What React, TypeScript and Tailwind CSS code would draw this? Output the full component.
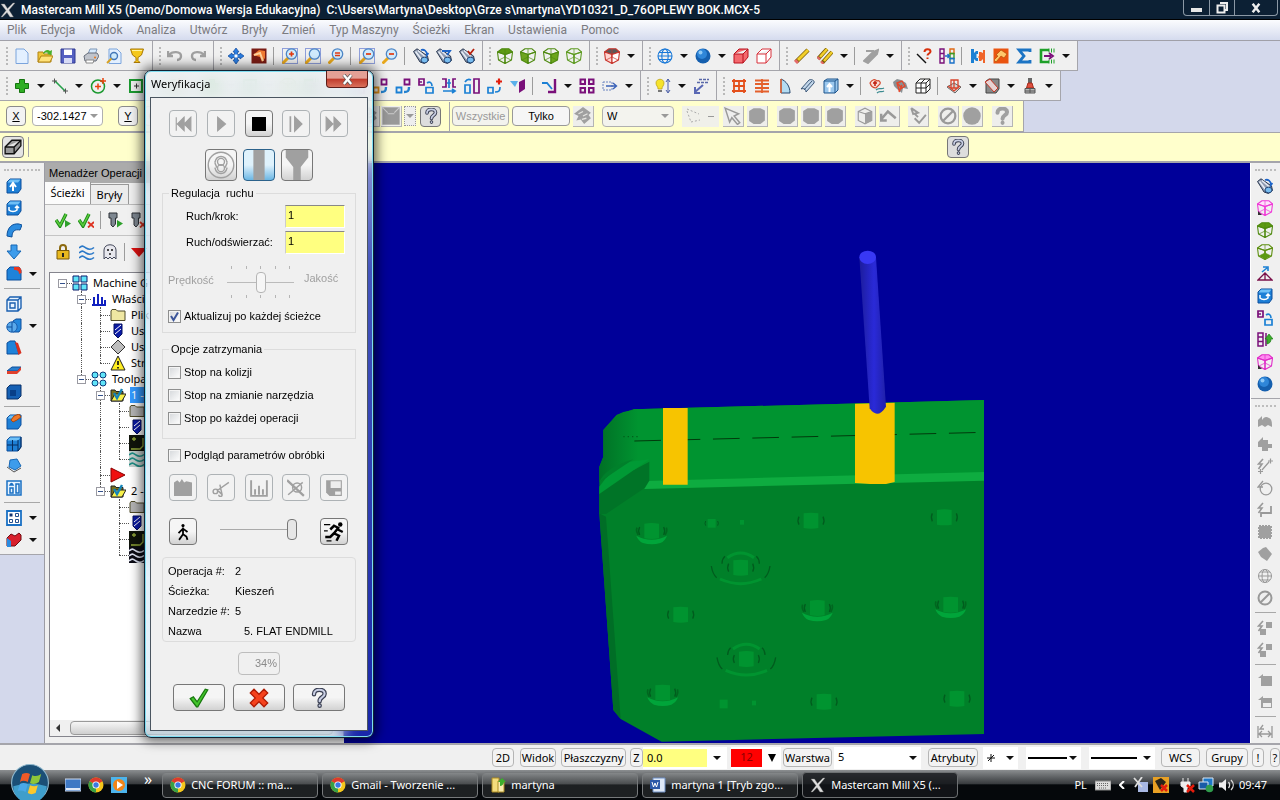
import React, {ReactNode} from "react";
import {clsx} from "clsx";

const cube = (color: string, top = "none", left = "none", right = "none") => (
    <g stroke={color} strokeWidth="1.100" strokeLinejoin="round">
        <path d="M.5 4 5 .8h7L15.500 4 8 6.500z" fill={top}/>
        <path d="M.5 4 8 6.500v9L1.500 12z" fill={left}/>
        <path d="M15.500 4 8 6.500v9l6.500-3.500z" fill={right}/>
        <path d="M2 12l6-3 6 3M8 1v8" fill="none" strokeWidth=".7"/>
    </g>
);

const magnifier = (sign: string, dotted: boolean) => (
    <g fill="none">
        {dotted && <path d="M.5.5h15v15H.5z" stroke="#2f4fc4" strokeDasharray="1 1"/>}
        <path d="M1.500 14.500 6 10" stroke="#e8a81c" strokeWidth="3" strokeLinecap="round"/>
        <circle cx="9.500" cy="6" r="5.200" fill="#cfeafc" stroke="#4d86c6" strokeWidth="1.300"/>
        <path d={sign} stroke="#e23a10" strokeWidth="1.700"/>
    </g>
);

const binoculars = (accent: string, mark: string) => (
    <g>
        <path d="M.5 3.500 4 .8 14.500 8l1 4.500-4 3L7 14z" fill="#8f9bb0" stroke="#2b3850"/>
        <path d="M2.500 3.500 9 12M5 2.500l7 6" stroke="#e6ecf5" strokeWidth="1.600"/>
        <ellipse cx="11.500" cy="12" rx="3.500" ry="2.800" fill="#78bdf0" stroke="#274a7a"/>
        <path d={mark} fill="none" stroke={accent} strokeWidth="1.800"/>
    </g>
);

const blueBox = (extra: ReactNode) => (
    <g>
        <path d="M1 4 4 1h11v10l-3 4H1z" fill="#1d7fd6" stroke="#0d4f9c"/>
        <path d="M1.500 4.500 4 1.500h10.500L12 4.500z" fill="#6fc0f7"/>
        {extra}
    </g>
);

const squares = (a: string, b: string, d: string) => (
    <g fill="none" strokeWidth="1.800">
        <path d="M9.500 1.500h5v5h-5z" stroke={a}/>
        <path d="M1.500 9.500h5v5h-5z" stroke={b}/>
        <path d={d} stroke="#2482cf" strokeWidth="2.400"/>
    </g>
);

const grayCube = <path d="M1 3.500 5 1h6l4 2v9l-4 3H5l-4-2.500z" fill="#a0a0a0"/>;
const bolt = <path d="M6 1 1.500 6H5L1.500 11" fill="none" stroke="#999" strokeWidth="1.600"/>;
const question = (fill: string, stroke: string) => (
    <g fill="none" strokeLinecap="round">
        <path d="M4 5c0-5 8.500-4.500 8.500-.5C12.500 7.500 8.500 7 8.500 10.500M8.500 14v.1" stroke={stroke} strokeWidth="3.600"/>
        <path d="M4 5c0-5 8.500-4.500 8.500-.5C12.500 7.500 8.500 7 8.500 10.500M8.500 14v.1" stroke={fill} strokeWidth="1.700"/>
    </g>
);
const folder = (fill: string) => <path d="M1 13.500V4l1-1.500h4L7.500 4H15v9.500z" fill={fill} stroke="#4f4a28"/>;
const waves = (stroke: string) => (
    <path d="M0 4c3-3 4-2 7 0s5 2 8-.5M0 9c3-3 4-2 7 0s5 2 8-.5M0 14c3-3 4-2 7 0s5 2 8-.5" fill="none"
          stroke={stroke} strokeWidth="1.600"/>
);
const shield = <g><path d="M4 1h8v10l-4 4-4-4z" fill="#0b1aa5" stroke="#06105f"/><path d="M5 7l6-5M5 11l6-5" stroke="#fff"/></g>;
const opFolder = (
    <g>
        <path d="M1 14V3h4l1 1.500h7V14z" fill="#77701b" stroke="#222"/>
        <path d="M1 14 5 7h11l-4 7z" fill="#f7f04a" stroke="#222"/>
        <path d="M4 6l3 5 5-9" fill="none" stroke="#1484b8" strokeWidth="2.400"/>
    </g>
);
const board = <g><path d="M0 0h16v16H0z" fill="#10140b"/><path d="M3 4h4M5 2v4M2 14h9l3-3V3" fill="none" stroke="#93a83a" strokeWidth="1.300"/></g>;
const toolShank = <path d="M2 1h8v5H8.500v6L6 15l-2-2V6H2z" fill="#7e8791" stroke="#2c3036"/>;

const icons: Record<string, ReactNode> = {
    x: <path d="M1 2h3.500l3 4.500L13 1h2L9 8l4.500 7H10L7 10.500 2.500 15H1l5-6.500z" fill="#ddd" stroke="#777" strokeWidth=".4"/>,
    new: <path d="M2 1h8l4 4v10.500H2z" fill="#e3f0ff" stroke="#7ba4dc"/>,
    open: <g><path d="M1 14V4h5l1 2h7v8z" fill="#f0c63a" stroke="#b28412"/><path d="M1 14 4 8h12l-3 6z" fill="#ffe27a" stroke="#b28412"/><path d="M6 6c1-4 5-5 7-3l2-1-.5 5L10 6l1.500-1C9.500 4 8 4.500 6 6z" fill="#47b02c"/></g>,
    save: <g><path d="M1 1h14v14H1z" fill="#5560c2" stroke="#303a92"/><path d="M4 1.500h8V7H4z" fill="#fff"/><path d="M4 10h8v5H4z" fill="#d7dbf5"/></g>,
    print: <g><path d="M5 6 7 1h7l-2 6z" fill="#d6e9fb" stroke="#7d97b8"/><path d="M1 8l4-3h9l2 3-3 5H2z" fill="#c0c4cc" stroke="#666d7a"/><path d="M3 12h8l-1 3H3z" fill="#fff" stroke="#888"/><circle cx="12" cy="9.500" r="1" fill="#e97718"/></g>,
    preview: <g><path d="M3 1h8l4 4v10.500H3z" fill="#e3f0ff" stroke="#7ba4dc"/><circle cx="8" cy="8" r="3.500" fill="#cdeafc" stroke="#4478b8" strokeWidth="1.400"/><path d="M5.500 10.500 1 15" stroke="#d8a224" strokeWidth="2"/></g>,
    trophy: <g><path d="M1.500 1h13l-2 6-3.500 2.500v3l2 2H5l2-2v-3L3.500 7z" fill="#f5c81c" stroke="#a97807"/><path d="M3 2.500h10" stroke="#fff3a0"/></g>,
    undo: <path d="M1 3v5h5M2 7c3-4 12-4 12 1 0 3-2 4-4 4" fill="none" stroke="#a0a0a0" strokeWidth="2.400"/>,
    redo: <path d="M15 3v5h-5M14 7C11 3 2 3 2 8c0 3 2 4 4 4" fill="none" stroke="#a0a0a0" strokeWidth="2.400"/>,
    pan: <g><path d="M8 0l3 4H9.500v2.500H12V5l4 3-4 3V9.500H9.500V12H11l-3 4-3-4h1.500V9.500H4V11L0 8l4-3v1.500h2.500V4H5z" fill="#2b7de0" stroke="#124a9c" strokeWidth=".7"/><path d="M6.500 6.500h3v3h-3z" fill="#fff"/></g>,
    repaint: <g><path d="M.5.5h15v15H.5z" fill="#7a1c14"/><path d="M2 7l6-5 6 1v7l-3 4-2-5z" fill="#ef7a32"/><path d="M3 7l6-2 3 8" stroke="#ffd09a" strokeWidth="2" fill="none"/></g>,
    hammer: <g><path d="M.5.5h15v15H.5z" fill="#ea5410"/><path d="M3 7l5-5 6 4-3 4-3-2-5 6-2-2 4-4z" fill="#ffc76b" stroke="#a94400" strokeWidth=".6"/></g>,
    zoomWindow: magnifier("M7 6h5M9.500 3.500v5", true),
    zoomTarget: magnifier("M0 0", true),
    zoomFit: magnifier("M7 5h5M7 7.500h5", false),
    unzoomBox: magnifier("M7 6h5", true),
    unzoom: magnifier("M7 6h5", false),
    view1: binoculars("#1c64c8", "M8 2c3-1 6 1 6 5l1.500-2"),
    view2: binoculars("#1c64c8", "M6 3h8l-3 4"),
    view3: binoculars("#b8200c", "M9 3l2 3 4-5"),
    cubeTop: cube("#4f8a10", "#5d9a12"),
    cubeFront: cube("#4f8a10", "none", "#6da51e"),
    cubeRight: cube("#4f8a10", "none", "none", "#6da51e"),
    cubeWire: cube("#5d9a20"),
    cubeBottom: <g>{cube("#5d8f10")}<path d="M2 12l6-3 6 3-6 3z" fill="#5d9a12"/></g>,
    cubeRedTop: cube("#c8342c", "#5a5a5a", "#ffd4d0", "#fff"),
    cubePink: <g>{cube("#f03ad8", "#ffe3fb")}<path d="M1 11l4 4H1z" fill="#333"/></g>,
    cubePinkFull: <g>{cube("#e02cc8", "#ff8cf0")}<path d="M1 11l4 4H1z" fill="#333"/></g>,
    redBox: <path d="M1 6l5-5h9v8l-5 6H1zM1 6h9l5-5M10 6v9" fill="#f4696e" stroke="#b8101c"/>,
    redWire: <path d="M1 6l5-5h9v8l-5 6H1zM1 6h9l5-5M10 6v9" fill="#fff" stroke="#d8303a"/>,
    globe: <g fill="none" stroke="#1878d8" strokeWidth="1.100"><circle cx="8" cy="8" r="7"/><ellipse cx="8" cy="8" rx="3.200" ry="7"/><path d="M1 8h14M2 4.500h12M2 11.500h12"/></g>,
    sphere: <g><circle cx="8" cy="8" r="7.500" fill="#155fae"/><circle cx="7" cy="6" r="5" fill="#2f86d8"/><circle cx="5.500" cy="4.500" r="2" fill="#8ec8f5"/></g>,
    pencil: <g><path d="M2 14 14 2" stroke="#7a5c08" strokeWidth="4.500"/><path d="M4 12 14 2" stroke="#f2cf2a" strokeWidth="3"/><path d="M1.500 14.500l2-2" stroke="#e46a6a" strokeWidth="4"/></g>,
    pencils: <g><path d="M1 11 10 1M5 15l10-11" stroke="#7a5c08" strokeWidth="4"/><path d="M3 9l7-8M7 13l8-9" stroke="#f2cf2a" strokeWidth="2.600"/><path d="M1 11l1.500-1.500M4.500 15.500 6 14" stroke="#e46a6a" strokeWidth="3.500"/></g>,
    grayPencil: <path d="M1 13 10 4l5-2-1 4-9 9zM3 3h8" fill="#a0a0a0" stroke="#a0a0a0" strokeWidth="2"/>,
    analyze: <g fill="none"><path d="M1 6l9 9" stroke="#111" strokeWidth="1.400"/><path d="M8.500 4c0-4 6-3.500 6-.5 0 2-3 2-3 4M11.500 9.500v1.500" stroke="#d8300c" strokeWidth="2"/></g>,
    map: <g fill="none" strokeWidth="1.400"><path d="M1 1h4v14H1zM1 5.500h4M1 10.500h4" stroke="#7a107a"/><path d="M11 1h4v4.500h-4z" stroke="#e06a14"/><path d="M11 5.500h4v5h-4z" stroke="#3a9a24"/><path d="M11 10.500h4V15h-4z" stroke="#1a70c8"/><path d="M6 8h4M8.500 6l2 2-2 2" stroke="#1a70c8"/></g>,
    joint: <g><path d="M1 1h3v4l2-2h2v3H6.500v4H8v3H6l-2-2v4H1z" fill="#1b80d4"/><path d="M15 2h-2v3l-2-1H9v4l-1 1 1 1v3h2l2-2v4h2z" fill="#f0642a"/></g>,
    sigma: <path d="M14 4V2H3l5 6-5 6h11v-2" fill="none" stroke="#1c74c4" strokeWidth="2.800"/>,
    chook: <g fill="none"><path d="M10 2H2v12h8" stroke="#1ea028" strokeWidth="2.600"/><path d="M10 .5v4M12.500.5v4M15 .5v4M10 11.500v4M12.500 11.500v4M15 11.500v4" stroke="#1ea028"/><path d="M5 8h7M10 5l4 3-4 3" stroke="#7a107a" strokeWidth="1.800"/></g>,
    plus: <path d="M5.500 1.500h5v4h4v5h-4v4h-5v-4h-4v-5h4z" fill="#2fae24" stroke="#15740f"/>,
    line: <g fill="none"><path d="M3 3l10 10" stroke="#25a04a" strokeWidth="1.600"/><path d="M0 3h5M2.500.5v5M11 13h5M13.500 10.500v5" stroke="#555"/></g>,
    arc: <g fill="none"><circle cx="8" cy="8.500" r="6.500" stroke="#1c9a30" strokeWidth="1.500"/><path d="M5 8.500h6M8 5.500v6M10 3h6M13 0v6" stroke="#e8420c" strokeWidth="1.500"/></g>,
    rect: <g fill="none"><path d="M2 2h12v12H2z" stroke="#1c9a30" strokeWidth="2"/><path d="M6 8h5M8.500 5.500v5" stroke="#333"/></g>,
    xf1: squares("#7a107a", "#e09018", "M9 14c4 0 5-1 5-5"),
    xf2: squares("#7a107a", "#1b80d4", "M9 14c4 0 5-1 5-5"),
    xf3: <g fill="none" strokeWidth="1.700"><path d="M1 1h5v6H1zM1 4h3" stroke="#7a107a"/><path d="M8 9.500h7V15H8zM9 5c3-2 5 0 5 3" stroke="#1b80d4"/></g>,
    xf4: <g fill="none" strokeWidth="1.700"><path d="M1 1h4v8H1M15 1h-3v8h3" stroke="#7a107a"/><path d="M8 1v9M6 5h4M2 13h11M11 11l3 2-3 2" stroke="#1b80d4"/></g>,
    xf5: <g fill="none" strokeWidth="1.700"><path d="M10 1h5v14h-5z" stroke="#7a107a"/><path d="M1 7h5v8H1zM1 4c2-3 4-3 6-2" stroke="#1b80d4"/></g>,
    xf6: <g fill="none" strokeWidth="1.700"><path d="M1 9.500h5V15H1zM8 14c4 0 5-1 5-5" stroke="#1b80d4"/><path d="M9 3.500h6M12 .5v6" stroke="#e01c0c" strokeWidth="2.200"/></g>,
    xf7: <g><path d="M0 3h8l-3 6z" fill="#5ab0ea"/><path d="M9 4l6-3v10l-6 4z" fill="#7a107a"/></g>,
    trim: <g fill="none"><path d="M14 1v13H7" stroke="#7a107a" strokeWidth="2.400"/><path d="M1 5h5l5 6" stroke="#1b80d4" strokeWidth="1.800"/></g>,
    four: <path d="M1.500 1.500h4.500v4.500H1.500zM10 1.500h4.500v4.500H10zM1.500 10h4.500v4.500H1.500zM10 10h4.500v4.500H10z" fill="none" stroke="#7a107a" strokeWidth="2"/>,
    stretch: <g fill="none"><path d="M1 4h9v8H1z" stroke="#6a84c0" strokeDasharray="2 1"/><path d="M4 8h10M11 5l3.500 3-3.500 3" stroke="#3a62b8" strokeWidth="1.400"/></g>,
    bulb: <g><path d="M1 5c0-5 8-5 8 0 0 3-2 3-2 6H3C3 8 1 8 1 5z" fill="#f6e32c" stroke="#b79c10" strokeWidth=".7"/><path d="M3 13h4" stroke="#777" strokeWidth="2"/><path d="M13 1v13M11 4l2-3 2 3M11 12l2 3 2-3" fill="none" stroke="#4a5ea8"/></g>,
    ribbonArrow: <g fill="none"><path d="M6 1.500h10M4 4.500h12" stroke="#5a68a8" strokeDasharray="3 1" strokeWidth="1.500"/><path d="M10 7l-8 7M2 9v6h5" stroke="#5a68b4" strokeWidth="2"/></g>,
    gridRed: <path d="M3 1v14M13 1v14M8 2v12M1 3h14M1 13h14M2 8h12" fill="none" stroke="#e4501c" strokeWidth="1.800"/>,
    linesRed: <path d="M1 2.500h14M1 6h14M1 10h14M1 13.500h14M8 1v14" fill="none" stroke="#e4602c" strokeWidth="1.800"/>,
    fan: <g><path d="M4 1v14h9C13 8 9 3 4 1z" fill="#b4dcf2" stroke="#24466e"/><path d="M4 1v14" stroke="#e4602c" strokeWidth="1.500"/></g>,
    sweep: <path d="M1 11 9 2c2-1 6 0 5 3l-8 9c0-3-2-4-5-3zM4 12l8-9" fill="#c3d7ea" stroke="#3a5678"/>,
    extrude: <g><path d="M1 3l3-2h11v11l-3 3H1zM1 3h11v12M12 3l3-2" fill="#9cc8ee" stroke="#1d548c"/><path d="M6.500 14V7M4 9l2.500-3L9 9" fill="none" stroke="#fff" strokeWidth="2"/></g>,
    surf1: <g fill="none"><path d="M1 5c2-4 5-4 7-2 2-1 4 1 3 3l-4 4C4 10 2 8 1 5z" fill="#f9ddd7" stroke="#d4482c" strokeWidth="1.200"/><path d="M4 5h4M6 3v5" stroke="#c01c0c" strokeWidth="1.500"/><path d="M7 12c3-3 5 0 8-2M8 15c3-3 4 0 7-2" stroke="#3a8a90" strokeWidth="1.200"/></g>,
    surf2: <g><path d="M1 4 5 1l4 1 5 3 2 6-5-1-1 5-5-4-3-3z" fill="#8a9094"/><path d="M5 5l5-2 3 5-6 4zM7 14l3-7M5 5l5 5" fill="none" stroke="#e4482c" strokeWidth="1.400"/></g>,
    gridCube: <path d="M1 5l4-4h10v10l-4 4H1zM1 5h10v10M11 5l4-4M6 5v10M1 10h10M6 5l4-4M11 10l4-4" fill="#fff" stroke="#222"/>,
    mill1: <g><path d="M1 9l7-4 7 4-6 6z" fill="#d4d4d4" stroke="#666"/><path d="M5 2h7v8H5zM8 2v8M2 8l6 5 6-5" fill="none" stroke="#d8442c" strokeWidth="1.300"/></g>,
    mill2: <g><path d="M2 3l3-2h10v10l-3 4H2z" fill="#888" stroke="#444"/><path d="M1 4l5-3 8 9-4 4z" fill="#e7d2d2" stroke="#c43828"/></g>,
    mill3: <g><path d="M6 0h4v5H6z" fill="#666"/><path d="M6 5h4l1.500 5h-7z" fill="#e05040" stroke="#a42818"/><path d="M3 10.500h10V15H3zM8 10v5M3 13h10" fill="#b8b8b8" stroke="#555"/></g>,
    block: <path d="M1 8l6-6h8v5l-6 7H1zM1 8h8l6-6M9 8v6" fill="#999" stroke="#111" strokeWidth="1.200"/>,
    extrudeUp: blueBox(<path d="M7 13V7M4 9l3-4 3 4" fill="none" stroke="#fff" strokeWidth="2"/>),
    revolve: blueBox(<path d="M3 7v3c2 2 6 2 8 0V7M9 8l2-2 2 2" fill="none" stroke="#fff" strokeWidth="1.500"/>),
    pipe: <path d="M1 14C1 6 6 1 13 2l3 1-2 5C9 7 6 9 6 15z" fill="#2b8ce0" stroke="#0f519b"/>,
    down: <path d="M5 1h6v6h4l-7 8-7-8h4z" fill="#3d9ceb" stroke="#1767b4"/>,
    fillet: <g><path d="M1 4 4 1h9l2 3v10H1z" fill="#1f83da" stroke="#0d4f9c"/><path d="M8 1h5c2 1 2.500 3 2.500 6L13 8c0-3-1-4-5-4z" fill="#e83820"/></g>,
    shell: <path d="M1 4 4 1h11v11l-3 3H1zM1 4h11v11M12 4l3-3M4 7h5v5H4z" fill="#e9f4ff" stroke="#1a5fb0" strokeWidth="1.400"/>,
    bool: <g><path d="M7 3l3-2h5v10l-2 3H7z" fill="#2487dd" stroke="#0d4f9c"/><circle cx="6" cy="9" r="5.200" fill="#5aa9ea" stroke="#1a5fb0"/><path d="M6 4v10M1 9h5" stroke="#0d4f9c"/></g>,
    draft: <g><path d="M1 3l3-2h5l4 13H1z" fill="#1f83da" stroke="#0d4f9c"/><path d="M9 2l3 1 3.500 10-3 2z" fill="#d83020"/></g>,
    plate: <g><path d="M1 9l5-4h9l-4 4z" fill="#2b7fce" stroke="#0d4f9c"/><path d="M1 9h10l4-4v3l-4 4H1z" fill="#e0402c"/></g>,
    darkBox: <g><path d="M1 4 4 1h11v11l-3 3H1z" fill="#1560b4" stroke="#092f66"/><path d="M4 6h6v6H4z" fill="#083f88"/></g>,
    push: blueBox(<path d="M5 6l3-4 5-2 2 3-4 3-4 2z" fill="#f07828" stroke="#a84810"/>),
    net: blueBox(<path d="M6.500 4v11M1 9h11M12 4v11l3-4V1" fill="none" stroke="#072c5f"/>),
    wrap: <g><path d="M4 2l7-1 4 7-6 4-6-3z" fill="#3d9ceb" stroke="#1767b4"/><path d="M1 9l7 5 7-4" fill="none" stroke="#555"/></g>,
    layout: <path d="M1 1h14v14H1zM4 8h3v5H4zM4 5c1-2 2-2 3 0zM10 4h3v9h-3z" fill="#e9f4ff" stroke="#1a70c4" strokeWidth="1.500"/>,
    tiles: <g><path d="M1 1h14v14H1z" fill="#fff" stroke="#1a70c4" strokeWidth="1.800"/><path d="M3.500 3.500h3v3h-3z" fill="#14346e"/><path d="M9.500 3.500h3v3h-3zM3.500 9.500h3v3h-3zM9.500 9.500h3v3h-3z" fill="none" stroke="#24508e"/></g>,
    cut: <g><path d="M1 6l4-4 4 2 4-3 2 2v5l-6 6H1z" fill="#d8202c" stroke="#6e0a10"/><path d="M1 6l4 3v6H1z" fill="#2b8ce0"/></g>,
    pyramid: <g fill="none"><path d="M1 14l7-7 7 7zM8 7v7" stroke="#7a104a" strokeWidth="1.300"/><path d="M5 6l5-4M6 1h5v4" stroke="#1b80d4" strokeWidth="1.600"/></g>,
    mapGreen: <g><path d="M1 1h5v13H1zM1 5h5M1 9.500h5M9 1v13" fill="none" stroke="#7a107a" strokeWidth="1.500"/><path d="M10 12V7H8l4-5 4 5h-2c0 3-1 4-4 5z" fill="#3cae2c" stroke="#15740f" strokeWidth=".6"/></g>,
    g1: <path d="M1 6 5 2v4c2-3 4-4 7-2 3 1 3 5 3 9l-4-2-3 2-3-2-4 2z" fill="#a0a0a0"/>,
    g2: <path d="M1 6 6 1v3h5v4h4v4h-4v3H5v-4H1V7z" fill="#a0a0a0"/>,
    g3: <g fill="none" stroke="#999">{bolt}<path d="M5 12l7-8M11 3h5M13.500.5v5M1 13.500h5M3.500 11v5" strokeWidth="1.200"/></g>,
    g4: <g fill="none" stroke="#999" strokeWidth="1.300"><circle cx="9" cy="9" r="5.800"/><path d="M6 1 1 7h5"/></g>,
    g5: <g>{bolt}<path d="M4 15v-4h10V4" fill="none" stroke="#999" strokeWidth="1.800"/></g>,
    g6: <path d="M2 2h12v12H2z" fill="#a0a0a0" stroke="#a0a0a0" strokeWidth="2" strokeDasharray="2 1"/>,
    g7: <path d="M1 6l5-4 3-1 6 7-5 7-6-4z" fill="#a0a0a0"/>,
    g8: <g fill="none" stroke="#999"><circle cx="8" cy="8" r="6.500"/><ellipse cx="8" cy="8" rx="3" ry="6.500"/><path d="M1 8h14M3 4h10M3 12h10"/></g>,
    no: <g fill="none" stroke="#999" strokeWidth="2"><circle cx="8" cy="8" r="6.500"/><path d="M3.500 12.500l9-9"/></g>,
    g9: <g>{bolt}<path d="M9 2h6v6H9zM3 9h6v6H3z" fill="#a0a0a0"/></g>,
    g10: <path d="M1 6l5-4v2h9v10H4V6z" fill="#a0a0a0"/>,
    g11: <g><path d="M1 6l5-4v2h9v10H4V6z" fill="#a0a0a0"/><path d="M6 9h8v4H6z" fill="#eee"/></g>,
    g12: <path d="M1 2v12M15 2v12M2 10h12M5 7l-3 3 3 3M11 7l3 3-3 3M6 1 3 5h4" fill="none" stroke="#999" strokeWidth="1.300"/>,
    grayCube,
    grayHalf: <g><path d="M2 4l6-3 6 3v8l-6 3-6-3z" fill="none" stroke="#999"/><path d="M8 6l6-2v8l-6 3z" fill="#a0a0a0"/><path d="M2 4l6 2 6-2" fill="none" stroke="#999"/></g>,
    grayCurve: <path d="M1 11l6-7 7 6M1 6v6h5" fill="none" stroke="#999" strokeWidth="2.200"/>,
    grayTick: <path d="M2 1l6 4-3 1 3 3M2 1l2 6M5 10l4 4 6-7" fill="none" stroke="#999" strokeWidth="1.700"/>,
    grayDisc: <circle cx="8" cy="8" r="7.800" fill="#a0a0a0"/>,
    cursor: <path d="M1 1l12 5-4 2 5 6-2 1.500-5-6-2 4z" fill="#eee" stroke="#999" strokeWidth="1.300"/>,
    grayLeaf: <g><path d="M0 6 8 0l7 5-2 2 2 3-6 5-3-4-4 1 2-4z" fill="#a0a0a0"/><path d="M4 6l4-2M8 8l4-2M7 11l4-1" stroke="#e4e4e0" strokeWidth="1.200"/></g>,
    dotted: <path d="M1 1l12 5M1 3l4 11M5 14l9-2" fill="none" stroke="#aaa" strokeDasharray="2 2"/>,
    dark: <path d="M0 0h16v16H0zM0 0l5 5M16 0l-5 5M5 6h6" fill="#999" stroke="#ccc"/>,
    help: question("#c9cfe4", "#3a3f52"),
    helpGray: question("#a0a0a0", "#a0a0a0"),
    tickGo: <g><path d="M1 8l4 6 6-12" fill="none" stroke="#1e8c1c" strokeWidth="3.400"/><path d="M1 8l4 5.500L11 2" fill="none" stroke="#5ccc3c" strokeWidth="1.500"/><path d="M10 8l6 3.500-6 4z" fill="#2ea02c"/></g>,
    tickNo: <g><path d="M1 8l4 6 6-12" fill="none" stroke="#1e8c1c" strokeWidth="3.400"/><path d="M1 8l4 5.500L11 2" fill="none" stroke="#5ccc3c" strokeWidth="1.500"/><path d="M10 10l6 5.500M16 10l-6 5.500" stroke="#dd3322" strokeWidth="1.800"/></g>,
    toolGo: <g>{toolShank}<path d="M10 8l6 3.500-6 4z" fill="#2ea02c"/></g>,
    toolNo: <g>{toolShank}<path d="M10 10l6 5.500M16 10l-6 5.500" stroke="#dd3322" strokeWidth="1.800"/></g>,
    lock: <g><path d="M5 8V4c0-4 6-4 6 0v4" fill="none" stroke="#8c6a10" strokeWidth="2"/><path d="M2 6.500h12V15H2z" fill="#e9b91f" stroke="#7a5a08"/><path d="M8 9v4" stroke="#222" strokeWidth="2"/></g>,
    waves: waves("#2a78c8"),
    ghost: <g><path d="M2 15V6c0-7 12-7 12 0v9l-2-2-2 2-2-2-2 2-2-2z" fill="#e8e8ee" stroke="#44485a"/><path d="M6 5v2M10 5v2M7 10h2" stroke="#222" strokeWidth="1.600"/></g>,
    redDown: <path d="M0 4h16l-8 9z" fill="#dd1111"/>,
    machine: <path d="M1 1h6v6H1zM9 1h6v6H9zM1 9h6v6H1zM9 9h6v6H9z" fill="#5fe4f8" stroke="#0a1a6a"/>,
    props: <path d="M3 6v8M7 3v11M11 6v8M1 14h14M14 9v5" fill="none" stroke="#1020c0" strokeWidth="2"/>,
    folder: folder("#efe7a2"),
    folderGray: folder("#b4b4b4"),
    shield,
    diamond: <path d="M8 1l7 7-7 7-7-7z" fill="#bdbdbd" stroke="#333"/>,
    warn: <g><path d="M8 1l7 14H1z" fill="#ffee22" stroke="#222"/><path d="M8 6v4M8 12v1.500" stroke="#111" strokeWidth="1.700"/></g>,
    toolpath: <g fill="#5fe4f8" stroke="#0a3a7a"><circle cx="4" cy="4" r="3"/><circle cx="12" cy="4" r="3"/><circle cx="4" cy="12" r="3"/><circle cx="12" cy="12" r="3"/></g>,
    opFolder,
    board,
    wavesTeal: <g><path d="M0 0h16v16H0z" fill="#c4cfcd"/>{waves("#1c8c84")}</g>,
    wavesDark: <g><path d="M0 0h16v16H0z" fill="#0a0a14"/>{waves("#dfe4f4")}</g>,
    insert: <path d="M1 1l14 7-14 7z" fill="#f01010" stroke="#800"/>,
    rewind: <path d="M2 2v12M9 2 3 8l6 6zM15 2 9 8l6 6z" fill="#a0a0a0" stroke="#a0a0a0"/>,
    play: <path d="M5 2l7 6-7 6z" fill="#a0a0a0" stroke="#a0a0a0"/>,
    stop: <path d="M1 1h14v14H1z" fill="#000"/>,
    step: <path d="M3 1v14M7 2l6 6-6 6z" fill="#a0a0a0" stroke="#a0a0a0" strokeWidth="1.500"/>,
    forward: <path d="M1 2l6 6-6 6zM8 2l6 6-6 6z" fill="#a0a0a0" stroke="#a0a0a0"/>,
    turbo: <g fill="none" stroke="#a0a0a0" strokeWidth=".8"><circle cx="8" cy="8" r="7.300"/><circle cx="8" cy="6.200" r="2"/><circle cx="8" cy="9.800" r="2"/><path d="M4.500 6c0 2 1 2 1 3.500M11.500 6c0 2-1 2-1 3.500M4.500 9.500c1 4.500 6 4.500 7 0M4.500 6.500c1-4.500 6-4.500 7 0"/></g>,
    cylinder: <path d="M5 0h6v16H5z" fill="#a0a0a0"/>,
    holder: <path d="M2 0h12v4l-4 5v7H6V9L2 4z" fill="#a0a0a0"/>,
    stock: <path d="M0 3l3-2 2 2 2-3 2 3 2-1 5 1v12H0z" fill="#a0a0a0"/>,
    scissors: <path d="M1 11a2 2 0 104 0 2 2 0 10-4 0M5 10 15 3M4 9l5 5M6 14a1.500 1.500 0 103 0L7 5" fill="none" stroke="#a0a0a0" strokeWidth="1.300"/>,
    chart: <path d="M1 1v14h14V1M4.500 14V9M8 14V6M11.500 14V9" fill="none" stroke="#a0a0a0" strokeWidth="1.700"/>,
    measure: <g fill="none" stroke="#a0a0a0" strokeWidth="1.300"><path d="M0 1l15 14" strokeWidth="2"/><path d="M14 3 1 14"/><circle cx="9" cy="7.500" r="4"/></g>,
    disk: <g><path d="M1 1h14v14H4l-3-3z" fill="#a0a0a0"/><path d="M5 2h9v6H5zM9 11h5v3H9z" fill="#eee"/></g>,
    walk: <g fill="none" stroke="#000" strokeWidth="1.600"><circle cx="8" cy="2.300" r="1.400" fill="#000" stroke="none"/><path d="M8 4v6l-3.500 5M8 10l3 2 1 3M8 5l-4 4M8 5l4 3"/></g>,
    run: <g fill="none" stroke="#000" strokeWidth="2"><circle cx="13" cy="2" r="1.800" fill="#000" stroke="none"/><path d="M12 4 8 9l4 2-2 4M8 9l-3 3H1M12 5 8 3 5 6M11 6l4 2"/><path d="M0 2h5M0 7h3M2 15h4" strokeWidth="1"/></g>,
    ok: <path d="M1 8.500 3.500 7l3 4L13 1l2 .5L7 15H6z" fill="#43c52c" stroke="#18780e"/>,
    cancel: <path d="M1 4l3-3 4 4 4-4 3 3-4 4 4 4-3 3-4-4-4 4-3-3 4-4z" fill="#f5421c" stroke="#b01c04"/>,
    desktop: <g><path d="M0 2h16v12H0z" fill="#3e78c4" stroke="#cfdcf0"/><path d="M1 12h14" stroke="#dfe8f6" strokeWidth="2"/></g>,
    chrome: <g><circle cx="8" cy="8" r="7.500" fill="#f4c61c"/><path d="M8 8 1.500 4.300A7.500 7.500 0 0114.500 4.300z" fill="#dd3a2c"/><path d="M8 8 1.500 4.300A7.500 7.500 0 008 15.500z" fill="#37a046"/><circle cx="8" cy="8" r="3.600" fill="#fff"/><circle cx="8" cy="8" r="2.700" fill="#3b78e0"/></g>,
    media: <g><path d="M0 0h16v16H0z" fill="#4cb4ec"/><circle cx="8" cy="8" r="6" fill="#f08418"/><path d="M6 4l6 4-6 4z" fill="#fff"/></g>,
    explorer: <g><path d="M2 1h7v14H2z" fill="#f3dc7c" stroke="#ad8c24"/><path d="M8 4h6v11H8z" fill="#f9ecae" stroke="#ad8c24"/><path d="M10 9V5H8l4-4 4 4h-2c0 2-2 4-4 4z" fill="#3cae2c"/></g>,
    word: <g><path d="M3 1h12v14H3z" fill="#dfe9f8" stroke="#6f8fc4"/><path d="M0 3h10v9H0z" fill="#2b58a8"/><path d="M2 5l1.500 5L5 6l1.500 4L8 5" fill="none" stroke="#fff"/></g>,
    keyboard: <g><path d="M0 4h16v9H0z" fill="#ddd" stroke="#888"/><path d="M2 6.500h12M2 8.500h12M4 11h8" stroke="#666" strokeDasharray="1 1"/></g>,
    trayX: <g><path d="M5 5h10v10H5z" fill="#a8b8e4"/><path d="M1 1l8 9M9 0 2 10" stroke="#ddd" strokeWidth="1.800"/></g>,
    trayWarn: <g><path d="M0 0h16v16H0z" fill="#e8a024"/><path d="M2 4l6-3 5 4-6 8z" fill="#292418"/><path d="M8 8l6 6M14 8l-6 6" stroke="#e41c0c" strokeWidth="2.500"/></g>,
    power: <g><path d="M4 1v4M9 1v4M2 5h9v4l-3 2v4H5v-4L2 9z" fill="#eee" stroke="#eee"/><path d="M8 8l7 7M15 8l-7 7" stroke="#e41c0c" strokeWidth="2.500"/></g>,
    network: <g><path d="M5 1h10v8H5z" fill="#1e78c8" stroke="#dce8f4"/><path d="M1 5h9v7H1z" fill="#1a5ca8" stroke="#dce8f4"/><circle cx="11.500" cy="11.500" r="3.800" fill="#2f9c4c"/></g>,
    sound: <g><path d="M1 5.500h3L8 2v12l-4-3.500H1z" fill="#eee"/><path d="M10.500 5c1.500 2 1.500 4 0 6M13 3c3 3 3 7 0 10" fill="none" stroke="#ddd" strokeWidth="1.300"/></g>,
};

const Icon = ({name, className = "size-4"}: { name: string, className?: string }) => (
    <svg viewBox="0 0 16 16" className={clsx("shrink-0", className)} aria-hidden="true">{icons[name]}</svg>
);

const Arrow = ({muted = false}: { muted?: boolean }) => (
    <svg viewBox="0 0 8 4" className={clsx("h-1 w-2 shrink-0", muted ? "text-[#999]" : "text-[#111]")}>
        <path d="M0 0h8L4 4z" fill="currentColor"/>
    </svg>
);

// "|" is a separator and "v" a drop-down arrow
const ToolGroup = ({items}: { items: string }) => (
    <div className="flex h-[30px] shrink-0 items-center border-r border-b border-[#a5a5ab] bg-[#f0f0f0] pr-1">
        <div className="ml-[6px] mr-[2px] h-[18px] w-[2px] border-l-2 border-dotted border-[#b9b9b9]"/>
        {items.split(" ").map((item, i) => {
            if (item === "|") return <div key={i} className="mx-[3px] h-[18px] w-[2px] border-l border-[#9c9c9c]"/>;
            return (
                <button key={i} aria-label={item}
                        className={clsx("flex h-[22px] items-center justify-center", item === "v" ? "w-[15px]" : "w-[23px]")}>
                    {item === "v" ? <Arrow/> : <Icon name={item}/>}
                </button>
            );
        })}
    </div>
);

const SideGroup = ({items, className = "border-b pb-[3px]"}: { items: string, className?: string }) => (
    <div className={clsx("flex flex-col border-[#a5a5ab] bg-[#f0f0f0]", className)}>
        <div className="mx-1 mt-[6px] mb-1 border-t-2 border-dotted border-[#bdbdbd]"/>
        {items.split(" ").map((item, i) => {
            if (item === "|") return <div key={i} className="mx-1 my-[3px] h-[2px] border-t border-[#a8a8a8]"/>;
            const [name, menu] = item.split("+");
            return (
                <button key={i} aria-label={name} className="flex h-[22px] items-center gap-[7px] pl-[6px]">
                    <Icon name={name}/>
                    {menu && <Arrow/>}
                </button>
            );
        })}
    </div>
);

const Combo = ({label, value, className, muted = false, children}: {
    label: string,
    value: string,
    className: string,
    muted?: boolean,
    children?: ReactNode
}) => (
    <div className={clsx("relative flex shrink-0 items-center", className)}>
        <select aria-label={label} className="h-full w-full appearance-none bg-transparent pl-1 outline-none">
            <option>{value}</option>
        </select>
        {children}
        <span className="pointer-events-none absolute right-1 flex"><Arrow muted={muted}/></span>
    </div>
);

const menus = ["Plik", "Edycja", "Widok", "Analiza", "Utwórz", "Bryły", "Zmień", "Typ Maszyny", "Ścieżki", "Ekran", "Ustawienia", "Pomoc"];

const TitleBar = () => (
    <header>
        <div className="flex h-5 items-center gap-[5px] border-b border-black bg-[#0c2034] text-[12px] text-white">
            <Icon name="x"/>
            <h1 className="whitespace-pre font-['Roboto',sans-serif] font-medium">
                {"Mastercam Mill X5 (Demo/Domowa Wersja Edukacyjna)  C:\\Users\\Martyna\\Desktop\\Grze s\\martyna\\YD10321_D_76OPLEWY BOK.MCX-5"}
            </h1>
            <div className="mr-[2px] ml-auto flex h-4 self-start overflow-hidden rounded-b border border-t-0 border-[#8b98a5]">
                <button aria-label="Minimalizuj" className="flex w-[26px] items-center justify-center border-r border-[#8b98a5]">
                    <span className="mt-1 h-1 w-[11px] bg-[#e6e6e6]"/>
                </button>
                <button aria-label="Przywróć" className="flex w-[25px] items-center justify-center border-r border-[#8b98a5]">
                    <svg viewBox="0 0 12 12" className="size-3"><path d="M4 1h7v7h-2M1.500 3.500h7v7h-7z" fill="none" stroke="#eee" strokeWidth="2"/></svg>
                </button>
                <button aria-label="Zamknij" className="flex w-[42px] items-center justify-center">
                    <svg viewBox="0 0 12 12" className="size-[10px]"><path d="M2 1l8 10M10 1 2 11" stroke="#eee" strokeWidth="3"/></svg>
                </button>
            </div>
        </div>
        <nav className="flex h-[21px] items-center gap-[14px] border-b border-[#a0a0a8] bg-linear-to-b from-[#fbfcfe] to-[#d5dbee] pl-[7px] font-['Roboto',sans-serif] text-[12px] text-[#7b7b80]">
            {menus.map(menu => <a key={menu} href="#">{menu}</a>)}
        </nav>
    </header>
);

const YellowButton = ({icon, className}: { icon: string, className?: string }) => (
    <button aria-label={icon}
            className={clsx("flex size-[21px] shrink-0 items-center justify-center border-r border-b border-[#b5b5b5] bg-[#eeeeec]", className)}>
        <Icon name={icon} className="size-[18px]"/>
    </button>
);

const Axis = ({name, value}: { name: string, value: string }) => (
    <div className="flex shrink-0 items-center gap-[6px]">
        <button className="h-5 w-5 rounded-sm border border-[#8b8b8b] bg-[#f3f3f3] underline">{name}</button>
        <Combo label={name} value={value} muted className="mr-[15px] h-5 w-[71px] rounded-sm border border-[#b0b0b0] bg-white"/>
    </div>
);

const Toolbars = () => (
    <div className="bg-[#d3d8eb] font-['Liberation_Sans',sans-serif] text-[11px]">
        <div className="flex overflow-hidden">
            <ToolGroup items="new open save print preview trophy"/>
            <ToolGroup items="undo redo"/>
            <ToolGroup items="pan repaint | zoomWindow zoomTarget zoomFit | unzoomBox unzoom | view1 view2 view3"/>
            <ToolGroup items="cubeTop cubeFront cubeRight cubeWire"/>
            <ToolGroup items="cubeRedTop v"/>
            <ToolGroup items="globe v sphere v redBox redWire"/>
            <ToolGroup items="pencil pencils v | grayPencil v"/>
            <ToolGroup items="analyze map | joint hammer sigma chook v"/>
        </div>
        <div className="flex overflow-hidden">
            <ToolGroup items="plus v line v arc v rect v arc v plus v rect v cubeWire chook sweep xf5 xf1 xf2 xf3 xf4 xf5 xf6 xf7 | trim v four stretch v"/>
            <ToolGroup items="bulb v ribbonArrow"/>
            <ToolGroup items="gridRed linesRed fan sweep extrude v | surf1 surf2 gridCube | mill1 v mill2 v mill3 v"/>
        </div>
        <div className="flex overflow-hidden">
            <div className="flex h-[31px] items-center border-r border-b border-[#a5a5ab] bg-[#ffffcc] pr-[10px] pl-[6px]">
                <Axis name="X" value="-302.1427"/>
                <Axis name="Y" value="0.0"/>
                <Axis name="Z" value="0.0"/>
                <YellowButton icon="grayLeaf" className="ml-[17px]"/>
                <YellowButton icon="dark" className="ml-px"/>
                <button aria-label="Więcej" className="ml-[2px] flex h-5 w-3 items-center justify-center border border-dotted border-[#999] bg-[#eee]"><Arrow muted/></button>
                <button aria-label="Pomoc" className="ml-1 flex size-[21px] items-center justify-center rounded-sm border border-[#777] bg-[#ddd]"><Icon name="help"/></button>
                <div className="mr-[2px] ml-2 h-[29px] border-l border-[#a5a5ab]"/>
                <button className="h-5 w-[57px] rounded-sm border border-[#adadad] bg-[#f3f3ee] text-[#999]">Wszystkie</button>
                <button className="ml-[3px] h-5 w-[58px] rounded-sm border border-[#999] bg-[#f6f6f6]">Tylko</button>
                <YellowButton icon="grayLeaf" className="ml-[3px]"/>
                <Combo label="Maska" value="W" muted className="ml-2 h-[21px] w-[72px] rounded-sm border border-[#b0b0b0] bg-[#f3f3ee]"/>
                <div className="ml-2 flex h-[21px] w-[37px] items-center gap-[6px] bg-[#f0f0ea] pl-1"><Icon name="dotted"/><span className="h-px w-[6px] bg-[#999]"/></div>
                <YellowButton icon="cursor" className="ml-1"/>
                <YellowButton icon="grayCube" className="ml-[3px]"/>
                <YellowButton icon="grayCube" className="ml-[9px]"/>
                <YellowButton icon="grayCube" className="ml-[3px]"/>
                <YellowButton icon="grayCube" className="ml-[3px]"/>
                <YellowButton icon="grayHalf" className="ml-[9px]"/>
                <YellowButton icon="grayCurve" className="ml-[3px]"/>
                <YellowButton icon="grayTick" className="ml-2"/>
                <YellowButton icon="no" className="ml-[9px]"/>
                <YellowButton icon="grayDisc" className="ml-[3px]"/>
                <YellowButton icon="helpGray" className="ml-[9px]"/>
            </div>
        </div>
        <div className="flex h-[31px] items-center border-t border-b-2 border-[#a5a5ab] bg-[#ffffcc] pl-[2px]">
            <button aria-label="Bryła" className="flex size-[22px] items-center justify-center rounded-sm border border-[#777] bg-[#e4e4e4]"><Icon name="block" className="size-[18px]"/></button>
            <div className="ml-[4px] h-5 border-l border-[#a5a5ab]"/>
            <button aria-label="Pomoc" className="ml-[918px] flex size-[22px] shrink-0 items-center justify-center rounded-sm border border-[#777] bg-[#ddd]"><Icon name="help"/></button>
        </div>
    </div>
);

const tree: { depth: number, icon: string, text: string, open?: boolean, selected?: boolean }[] = [
    {depth: 0, icon: "machine", text: "Machine G", open: true},
    {depth: 1, icon: "props", text: "Właści", open: true},
    {depth: 2, icon: "folder", text: "Plik"},
    {depth: 2, icon: "shield", text: "Us"},
    {depth: 2, icon: "diamond", text: "Us"},
    {depth: 2, icon: "warn", text: "Str"},
    {depth: 1, icon: "toolpath", text: "Toolpa", open: true},
    {depth: 2, icon: "opFolder", text: "1 -", open: true, selected: true},
    {depth: 3, icon: "folderGray", text: ""},
    {depth: 3, icon: "shield", text: ""},
    {depth: 3, icon: "board", text: ""},
    {depth: 3, icon: "wavesTeal", text: ""},
    {depth: 2, icon: "insert", text: ""},
    {depth: 2, icon: "opFolder", text: "2 -", open: true},
    {depth: 3, icon: "folderGray", text: ""},
    {depth: 3, icon: "shield", text: ""},
    {depth: 3, icon: "board", text: ""},
    {depth: 3, icon: "wavesDark", text: ""},
];

// a guide is drawn at a level while a later row still hangs on it
const hasNext = (row: number, level: number) => {
    for (let i = row + 1; i < tree.length; i++) {
        if (tree[i].depth < level) return false;
        if (tree[i].depth === level) return true;
    }
    return false;
};

const OperationsPanel = () => (
    <aside className="flex w-[300px] shrink-0 flex-col border-l border-[#9c9ca4] bg-[#f0f0f0] font-['Noto_Sans',sans-serif] text-[11px]">
        <h2 className="h-5 bg-[#ababab] pl-1 font-['Liberation_Sans',sans-serif] leading-5">Menadżer Operacji</h2>
        <div className="flex h-[22px] items-end border-b border-[#bbb]" role="tablist">
            <button role="tab" className="h-[22px] w-[46px] border-r border-[#999] bg-[#fbfbfb] leading-4">Ścieżki</button>
            <button role="tab" className="h-5 w-[38px] border-t border-r border-[#999] bg-[#ececec] leading-4">Bryły</button>
        </div>
        <div className="flex h-[31px] items-center border-b border-[#c4c4c4] pl-[10px]">
            <button aria-label="Zaznacz" className="mr-[7px]"><Icon name="tickGo"/></button>
            <button aria-label="Odznacz" className="mr-[6px]"><Icon name="tickNo"/></button>
            <div className="mr-[6px] h-[18px] border-l border-[#9c9c9c]"/>
            <button aria-label="Regeneruj" className="mr-[7px]"><Icon name="toolGo"/></button>
            <button aria-label="Usuń"><Icon name="toolNo"/></button>
        </div>
        <div className="flex h-9 items-center pb-1 pl-[10px]">
            <button aria-label="Zablokuj" className="mr-2"><Icon name="lock"/></button>
            <button aria-label="Ścieżki" className="mr-[7px]"><Icon name="waves"/></button>
            <button aria-label="Duch" className="mr-[6px]"><Icon name="ghost"/></button>
            <div className="mr-[6px] h-[18px] border-l border-[#9c9c9c]"/>
            <button aria-label="Przesuń"><Icon name="redDown"/></button>
        </div>
        <div className="mb-[6px] ml-1 flex flex-1 flex-col border border-[#85858d] bg-white">
            <ul className="flex-1 pt-[2px] pl-[3px]">
                {tree.map((node, row) => (
                    <li key={row} className="flex h-4 items-center whitespace-nowrap">
                        {Array.from({length: node.depth}, (_, level) => (
                            <span key={level} className="flex h-4 w-[19px] justify-center">
                                {hasNext(row, level) && level > 0 && <span className="h-4 border-l border-dotted border-[#555]"/>}
                            </span>
                        ))}
                        <span className="relative flex h-4 w-[19px] items-center">
                            {node.depth > 0 && (
                                <span className={clsx("absolute top-0 left-[9px] border-l border-dotted border-[#555]", hasNext(row, node.depth) ? "h-4" : "h-2")}/>
                            )}
                            <span className="ml-[9px] w-[10px] border-t border-dotted border-[#555]"/>
                            {node.open && (
                                <span className="absolute left-[5px] flex size-[9px] items-center justify-center border border-[#9a9aa2] bg-white">
                                    <span className="h-px w-[5px] bg-[#33508c]"/>
                                </span>
                            )}
                        </span>
                        <Icon name={node.icon}/>
                        {node.text && (
                            <span className={clsx("ml-1 px-px leading-4", node.selected && "bg-[#3399ff] text-white")}>{node.text}</span>
                        )}
                    </li>
                ))}
            </ul>
            <div className="flex h-4 items-center bg-[#f0f0f0] pl-[6px]">
                <svg viewBox="0 0 4 8" className="h-2 w-1"><path d="M4 0v8L0 4z" fill="#333"/></svg>
                <div className="mx-[10px] h-[14px] flex-1 rounded-sm border border-[#9a9a9a] bg-linear-to-b from-[#f6f6f6] to-[#cfcfcf]"/>
            </div>
        </div>
    </aside>
);

// [x, y, kind]: 0 plain hole, 1 countersunk, 2 counterbored, 3 pin hole, 4 blind pin
const holes: [number, number, number][] = [
    [185, 873, 1], [365, 850, 3], [456, 847, 4], [663, 842, 0], [1063, 832, 0],
    [452, 983, 2], [272, 1124, 0], [682, 1104, 1], [1082, 1094, 1], [469, 1257, 2],
    [218, 1358, 1], [401, 1392, 5], [492, 1389, 4], [702, 1385, 0], [1101, 1376, 0],
];

const Hole = ({kind}: { kind: number }) => {
    if (kind === 4) return <path d="M-6-7H6V7H-6z" fill="#009430"/>;
    if (kind === 5) return <path d="M-12-13h24v26h-24z" fill="#009430"/>;
    if (kind === 3) return (
        <g><path d="M-12-13h24v26h-24z" fill="#009430"/><path d="M-18-7q-4 7 0 14M18-7q4 7 0 14" fill="none" stroke="#005c1e" strokeWidth="3"/></g>
    );
    return (
        <g fill="none">
            {kind === 1 && <path d="M-46 14Q-24 26 0 26T46 14Q40 30 26 36Q0 44-26 36-40 30-46 14z" fill="#00a53a"/>}
            {kind === 2 && (
                <g>
                    <path d="M-40-30Q-20-44 0-44T40-30M-62 34Q-30 48 0 48T62 34" stroke="#009430" strokeWidth="9"/>
                    <path d="M-88-5Q-84 20-72 30M88-5Q84 20 72 30M-56-12q0-14 9-22M56-12q0-14-9-22" stroke="#005c1e" strokeWidth="4"/>
                </g>
            )}
            <path d="M-22-22Q0-26 22-22V22Q0 26-22 22z" fill="#009430"/>
            <path d="M-36-12q-6 12 0 24M36-12q6 12 0 24" stroke="#005c1e" strokeWidth="4"/>
            {kind === 1 && <path d="M-44-10q-4 10 4 22M44-10q4 10-4 22" stroke="#00661f" strokeWidth="5"/>}
        </g>
    );
};

const Viewport = () => (
    <main className="min-w-0 flex-1 bg-[#000099]">
        <svg viewBox="-738 -231 2718 1740" className="block w-full" role="img" aria-label="Symulacja">
            <defs>
                <linearGradient id="shank">
                    <stop offset="0" stopColor="#1c1c9c"/>
                    <stop offset=".55" stopColor="#2a2ad8"/>
                    <stop offset="1" stopColor="#2020a8"/>
                </linearGradient>
                <linearGradient id="corner">
                    <stop offset="0" stopColor="#007026"/>
                    <stop offset="1" stopColor="#009430"/>
                </linearGradient>
            </defs>
            <path d="M40 570 80 525 130 508 1182 480V1482L215 1505 92 1437 70 1410 28 820V680L40 650z" fill="#008029"/>
            <path d="M130 508 1182 480V700L170 722 100 665 130 640z" fill="#009430"/>
            <path d="M40 570 80 525 100 516 145 507V655L28 725V680L40 650z" fill="url(#corner)"/>
            <path d="M28 820 48 830 92 1437 70 1410z" fill="#006e26"/>
            <path d="M28 745 178 665V722L163 745 48 822H28z" fill="#007427"/>
            <path d="M28 740Q60 690 120 665L178 658 28 762z" fill="#009a35"/>
            <path d="M28 725Q50 680 130 658L60 705z" fill="#00802b"/>
            <path d="M178 722 1182 696V722L163 747z" fill="#0eac40"/>
            <path d="M133 603 1182 577" stroke="#003a0c" strokeWidth="3" strokeDasharray="80 38"/>
            <path d="M100 590h50" stroke="#00601c" strokeWidth="4" strokeDasharray="4 9"/>
            <path d="M219 504h74v230h-74z" fill="#f7c400"/>
            <path d="M795 491 914 488V726L888 732H840L795 729z" fill="#f7c400"/>
            <path d="M808 52 858 52 888 500Q862 540 839 505z" fill="url(#shank)"/>
            <ellipse cx="833" cy="52" rx="25" ry="20" fill="#3838f4"/>
            {holes.map(([x, y, kind]) => (
                <g key={`${x}-${y}`} transform={`translate(${x} ${y})`}><Hole kind={kind}/></g>
            ))}
        </svg>
    </main>
);

const DialogButton = ({icon, label, disabled, className = "h-[27px] w-7", iconClass = "size-[18px]"}: {
    icon: string,
    label: string,
    disabled?: boolean,
    className?: string,
    iconClass?: string
}) => (
    <button aria-label={label} disabled={disabled}
            className={clsx(
                "flex items-center justify-center rounded-sm border",
                disabled ? "border-[#adb2b5] bg-[#f2f2f2]" : "border-[#777] bg-linear-to-b from-[#f5f5f5] from-50% to-[#d2d2d2]",
                className
            )}>
        <Icon name={icon} className={iconClass}/>
    </button>
);

const Check = ({label, checked = false}: { label: string, checked?: boolean }) => (
    <label className="flex h-[15px] items-center gap-[3px]">
        <span className="relative flex size-[13px]">
            <input type="checkbox" defaultChecked={checked}
                   className="peer size-[13px] appearance-none border border-[#8e8f8f] bg-linear-to-br from-[#d4d7da] to-white shadow-[inset_0_0_0_1px_#f4f4f4]"/>
            <svg viewBox="0 0 13 13" className="pointer-events-none absolute inset-0 hidden size-[13px] peer-checked:block">
                <path d="M3 6l2.500 4L10 2.500" fill="none" stroke="#3b5599" strokeWidth="2"/>
            </svg>
        </span>
        {label}
    </label>
);

const info = [["Operacja #:", "2"], ["Ścieżka:", "Kieszeń"], ["Narzedzie #:", "5"], ["Nazwa", "5. FLAT ENDMILL"]];

const Ticks = () => (
    <div className="flex justify-between px-1">
        {[0, 1, 2, 3, 4].map(tick => <span key={tick} className="h-[3px] w-px bg-[#b5b5b5]"/>)}
    </div>
);

const VerifyDialog = () => (
    <section role="dialog" aria-labelledby="verify-title"
             className="absolute top-[70px] left-[144px] w-[230px] rounded-[7px] border border-[#123] bg-linear-to-b from-[#eef2f5]/80 via-[#a9d4f2]/40 via-30% to-[#7fc4ee]/20 px-[5px] pb-[6px] font-['Liberation_Sans',sans-serif] text-[11px] shadow-[0_0_12px_3px_rgba(0,0,0,0.6),inset_0_0_0_1px_#7edcf0] backdrop-blur-sm">
        <div className="flex h-[26px] items-center justify-between pl-[1px]">
            <h2 id="verify-title" className="font-['Noto_Sans',sans-serif] text-[11px]">Weryfikacja</h2>
            <button aria-label="Zamknij" className="flex h-[17px] w-[42px] items-center justify-center self-start rounded-b border border-t-0 border-[#5d1c18] bg-linear-to-b from-[#e4a095] from-45% via-[#c0392a] via-50% to-[#d9705c]">
                <svg viewBox="0 0 12 12" className="size-[11px]"><path d="M2 1l8 10M10 1 2 11" stroke="#555" strokeWidth="4"/><path d="M2 1l8 10M10 1 2 11" stroke="#fff" strokeWidth="2.500"/></svg>
            </button>
        </div>
        <div className="flex flex-col border border-[#4a5560] bg-[#f0f0f0] px-[11px] pb-[19px]">
            <div className="mt-3 flex justify-between pr-2 pl-[7px]">
                <DialogButton icon="rewind" label="Od początku" disabled/>
                <DialogButton icon="play" label="Start" disabled/>
                <DialogButton icon="stop" label="Stop" iconClass="size-4"/>
                <DialogButton icon="step" label="Krok" disabled/>
                <DialogButton icon="forward" label="Do przodu" disabled/>
            </div>
            <div className="mt-3 flex justify-center gap-[6px]">
                <DialogButton icon="turbo" label="Turbo" className="size-8" iconClass="size-7"/>
                <DialogButton icon="cylinder" label="Narzędzie" className="size-8 border-[#2c628b]! from-[#dff2fc]! to-[#6ab7e4]!" iconClass="size-[30px]"/>
                <DialogButton icon="holder" label="Oprawka" className="size-8" iconClass="size-[30px]"/>
            </div>
            <fieldset className="mt-[5px] border border-[#dcdcdc] px-[5px] pb-2">
                <legend className="ml-px px-[2px] leading-[14px] whitespace-pre">Regulacja  ruchu</legend>
                <label className="mt-[5px] flex h-[23px] items-center pl-[18px]">
                    <span className="w-[99px]">Ruch/krok:</span>
                    <input defaultValue="1" className="h-[23px] w-[60px] border border-t-[#888] border-r-white border-b-white border-l-[#ccc] bg-[#ffff80] px-[2px] pb-1"/>
                </label>
                <label className="mt-[3px] flex h-[23px] items-center pl-[18px]">
                    <span className="w-[99px]">Ruch/odświerzać:</span>
                    <input defaultValue="1" className="h-[23px] w-[60px] border border-t-[#888] border-r-white border-b-white border-l-[#ccc] bg-[#ffff80] px-[2px] pb-1"/>
                </label>
                <div className="mt-3 flex h-8 items-center text-[#a0a0a0]">
                    <label htmlFor="quality" className="w-[59px] pb-1">Prędkość</label>
                    <div className="flex h-8 w-[67px] flex-col justify-between">
                        <Ticks/>
                        <input id="quality" type="range" disabled
                               className="h-[21px] w-full appearance-none bg-[linear-gradient(#bbb,#bbb)] bg-[length:100%_1px] bg-center bg-no-repeat [&::-webkit-slider-thumb]:h-[21px] [&::-webkit-slider-thumb]:w-[10px] [&::-webkit-slider-thumb]:appearance-none [&::-webkit-slider-thumb]:rounded-sm [&::-webkit-slider-thumb]:border [&::-webkit-slider-thumb]:border-[#b5b5b5] [&::-webkit-slider-thumb]:bg-[#f6f6f6]"/>
                        <Ticks/>
                    </div>
                    <span className="pb-2 pl-[10px]">Jakość</span>
                </div>
                <div className="mt-[11px]"><Check label="Aktualizuj po każdej ścieżce" checked/></div>
            </fieldset>
            <fieldset className="mt-[9px] flex flex-col border border-[#dcdcdc] px-[5px] pb-3">
                <legend className="ml-px px-[2px] leading-[14px]">Opcje zatrzymania</legend>
                <div className="mt-[9px] flex flex-col gap-2">
                    <Check label="Stop na kolizji"/>
                    <Check label="Stop na zmianie narzędzia"/>
                    <Check label="Stop po każdej operacji"/>
                </div>
            </fieldset>
            <div className="mt-[9px] pl-[6px]"><Check label="Podgląd parametrów obróbki"/></div>
            <div className="mt-[11px] flex justify-between pr-2 pl-[7px]">
                <DialogButton icon="stock" label="Materiał" disabled/>
                <DialogButton icon="scissors" label="Przekrój" disabled/>
                <DialogButton icon="chart" label="Porównaj" disabled/>
                <DialogButton icon="measure" label="Pomiar" disabled/>
                <DialogButton icon="disk" label="Zapisz" disabled/>
            </div>
            <div className="mt-[17px] flex items-center justify-between pr-2 pl-[7px]">
                <DialogButton icon="walk" label="Wolno"/>
                <input type="range" aria-label="Szybkość" defaultValue="100"
                       className="mb-1 h-[21px] w-[77px] appearance-none bg-[linear-gradient(#aaa,#aaa)] bg-[length:100%_1px] bg-center bg-no-repeat [&::-webkit-slider-thumb]:h-[21px] [&::-webkit-slider-thumb]:w-[10px] [&::-webkit-slider-thumb]:appearance-none [&::-webkit-slider-thumb]:rounded-sm [&::-webkit-slider-thumb]:border [&::-webkit-slider-thumb]:border-[#777] [&::-webkit-slider-thumb]:bg-[#e6e6e6]"/>
                <DialogButton icon="run" label="Szybko" iconClass="size-5"/>
            </div>
            <dl className="mt-3 rounded-sm border border-[#dcdcdc] px-[5px] pt-[3px]">
                {info.map(([term, value]) => (
                    <div key={term} className="flex h-5 items-center whitespace-nowrap">
                        <dt className="w-[67px]">{term}</dt>
                        <dd className={clsx(term === "Nazwa" && "pl-[9px]")}>{value}</dd>
                    </div>
                ))}
            </dl>
            <output className="mx-auto mt-[10px] flex h-[23px] w-[42px] justify-end rounded-sm border border-[#bdbdbd] pt-[2px] pr-[2px] text-[#8a8a8a]">34%</output>
            <div className="mt-[9px] flex justify-center gap-2">
                <DialogButton icon="ok" label="OK" className="h-[27px] w-[52px]" iconClass="size-5"/>
                <DialogButton icon="cancel" label="Anuluj" className="h-[27px] w-[52px]" iconClass="size-5"/>
                <DialogButton icon="help" label="Pomoc" className="h-[27px] w-[52px]" iconClass="size-5"/>
            </div>
        </div>
    </section>
);

const statusButton = "h-[19px] shrink-0 rounded-sm border border-[#b5b5b5] bg-[#f3f3f3] text-center leading-4";

const StatusBar = () => (
    <footer className="flex h-[27px] items-center justify-end overflow-hidden border-t-2 border-[#a5a5ab] bg-[#f0f0f0] font-['Noto_Sans',sans-serif] text-[11px] whitespace-nowrap">
        <button className={clsx(statusButton, "w-[22px]")}>2D</button>
        <button className={clsx(statusButton, "ml-[6px] w-9")}>Widok</button>
        <button className={clsx(statusButton, "ml-[5px] w-[65px]")}>Płaszczyzny</button>
        <button className={clsx(statusButton, "ml-1 w-[13px]")}>Z</button>
        <div className="flex h-[22px] items-center bg-white">
            <input aria-label="Głębokość Z" defaultValue="0.0" className="h-[18px] w-[64px] bg-[#ffff80] pl-1"/>
            <button aria-label="Wybierz Z" className="flex w-5 justify-center"><Arrow/></button>
        </div>
        <div className="ml-1 flex h-[22px] items-center bg-white">
            <button className="h-[18px] w-[31px] bg-[#ff0000] text-[#8a0000]">12</button>
            <button aria-label="Kolor" className="flex w-[19px] justify-center">
                <svg viewBox="0 0 8 8" className="size-2"><path d="M0 0h8L4 8z"/></svg>
            </button>
        </div>
        <button className={clsx(statusButton, "ml-[2px] w-[49px]")}>Warstwa</button>
        <Combo label="Warstwa" value="5" className="ml-[2px] h-[22px] w-[87px] bg-white"/>
        <button className={clsx(statusButton, "ml-[7px] w-[50px]")}>Atrybuty</button>
        <Combo label="Punkt" value="" className="ml-[5px] h-[22px] w-[35px] bg-white">
            <svg viewBox="0 0 8 8" className="pointer-events-none absolute left-1 size-2"><path d="M0 4h8M4 0v8M1 7l6-6" stroke="#111" fill="none"/></svg>
        </Combo>
        <Combo label="Styl linii" value="" className="ml-2 h-[22px] w-[55px] bg-white">
            <span className="pointer-events-none absolute left-[2px] h-[2px] w-[39px] bg-black"/>
        </Combo>
        <Combo label="Grubość linii" value="" className="ml-2 h-[22px] w-[66px] bg-white">
            <span className="pointer-events-none absolute left-[2px] h-[2px] w-[46px] bg-black"/>
        </Combo>
        <button className={clsx(statusButton, "ml-[6px] w-[39px]")}>WCS</button>
        <button className={clsx(statusButton, "ml-[6px] w-[42px]")}>Grupy</button>
        <button className={clsx(statusButton, "ml-1 w-3")}>!</button>
        <button className={clsx(statusButton, "ml-[6px] w-[10px]")}>?</button>
    </footer>
);

const tasks = [
    {icon: "chrome", text: "CNC FORUM :: ma..."},
    {icon: "chrome", text: "Gmail - Tworzenie ..."},
    {icon: "explorer", text: "martyna"},
    {icon: "word", text: "martyna 1 [Tryb zgo..."},
    {icon: "x", text: "Mastercam Mill X5 (...", active: true},
];

const Taskbar = () => (
    <div className="flex h-[30px] items-center bg-linear-to-b from-[#8b8e90] via-[#3a3d40] via-45% to-[#05080b] to-50% font-['Noto_Sans',sans-serif] text-[11px] text-white">
        <button aria-label="Start" className="ml-[11px] shrink-0">
            <svg viewBox="0 0 34 34" className="-mt-1 size-[38px]">
                <circle cx="17" cy="17" r="16.500" fill="#1b4f76" stroke="#8fb7cc"/>
                <path d="M2 20a15 15 0 0030 0Q17 15 2 20z" fill="#3f9ecb"/>
                <path d="M10 9q4-2 7 0l-2 7q-4-2-7 0z" fill="#ee5a28"/>
                <path d="M19 10q4 2 8-1l-2 7q-4 3-8 1z" fill="#8cc63a"/>
                <path d="M8 18q3-2 7 0l-2 7q-3-2-7-1z" fill="#4aa8e8"/>
                <path d="M17 19q4 2 7 0l-2 7q-4 2-7 0z" fill="#fbc82c"/>
            </svg>
        </button>
        <div className="ml-4 flex gap-[7px]">
            <button aria-label="Pulpit"><Icon name="desktop"/></button>
            <button aria-label="Chrome"><Icon name="chrome"/></button>
            <button aria-label="Odtwarzacz"><Icon name="media"/></button>
        </div>
        <button className="ml-[17px] pb-3 text-[16px] leading-3">»</button>
        <div className="ml-[10px] flex gap-1">
            {tasks.map(task => (
                <button key={task.text}
                        className={clsx(
                            "flex h-[26px] w-[156px] items-center gap-[5px] rounded-sm border pl-[7px] whitespace-nowrap",
                            task.active ? "border-[#6d7072] bg-[#14171a]/80" : "border-[#777a7c] bg-linear-to-b from-[#85888a] via-[#4b4e50] via-45% to-[#1d2022] to-50%"
                        )}>
                    <Icon name={task.icon}/>
                    {task.text}
                </button>
            ))}
        </div>
        <div className="ml-auto flex items-center pr-[13px]">
            <span className="mr-2">PL</span>
            <Icon name="keyboard"/>
            <button aria-label="Ukryte ikony" className="mx-2 flex">
                <svg viewBox="0 0 6 8" className="h-2 w-[6px]"><path d="M5 0 1 4l4 4" fill="none" stroke="#fff" strokeWidth="2"/></svg>
            </button>
            <Icon name="trayX"/>
            <Icon name="trayWarn" className="ml-1 size-4"/>
            <Icon name="power" className="ml-[10px] size-4"/>
            <Icon name="network" className="ml-[3px] size-4"/>
            <Icon name="sound" className="ml-1 size-4"/>
            <time className="ml-[5px]">09:47</time>
        </div>
    </div>
);

const App = () => {
    return (
        <div className="relative flex min-h-screen flex-col overflow-hidden bg-[#f0f0f0] text-black">
            <TitleBar/>
            <Toolbars/>
            <div className="flex flex-1">
                <div className="w-11 shrink-0 bg-[#d3d8eb]">
                    <SideGroup items="extrudeUp revolve pipe down fillet+v | shell bool+v draft plate darkBox | push net wrap layout | tiles+v cut+v"/>
                </div>
                <OperationsPanel/>
                <Viewport/>
                <div className="w-[30px] shrink-0 border-l border-white bg-[#f0f0f0]">
                    <SideGroup items="view1 cubePink cubeTop cubeBottom pyramid revolve xf3 mapGreen cubePinkFull sphere"/>
                    <SideGroup items="g1 g2 g3 g4 g5 g6 g7 g8 no | g9 g9 | g10 g11 | g12" className="pb-0"/>
                </div>
            </div>
            <StatusBar/>
            <Taskbar/>
            <VerifyDialog/>
        </div>
    );
};

export default App;
